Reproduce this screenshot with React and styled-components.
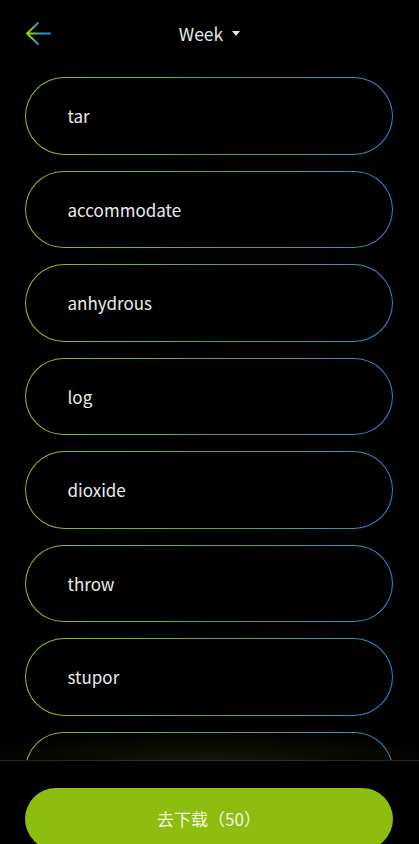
import React from "react";
import styled, { createGlobalStyle } from "styled-components";

const Global = createGlobalStyle`
  html, body { margin: 0; padding: 0; background: #000; }
  body { font-family: "Noto Sans CJK SC", "Noto Sans", sans-serif; }
  * { box-sizing: border-box; }
`;

const Page = styled.div`
  width: 419px;
  height: 844px;
  background: #000;
  display: flex;
  flex-direction: column;
  overflow: hidden;
`;

const Header = styled.header`
  height: 66px;
  flex: none;
  display: flex;
  align-items: center;
  justify-content: center;
  position: relative;
`;

const BackButton = styled.button`
  position: absolute;
  left: 22px;
  top: 18px;
  width: 32px;
  height: 32px;
  padding: 0;
  border: none;
  background: none;
  display: flex;
  align-items: center;
  justify-content: center;
`;

const Title = styled.div`
  display: flex;
  align-items: center;
  gap: 9px;
  color: #e6e6e6;
  font-size: 17.5px;
`;

const Caret = styled.span`
  width: 0;
  height: 0;
  border-left: 4px solid transparent;
  border-right: 4px solid transparent;
  border-top: 5px solid #e6e6e6;
  margin-top: 1px;
`;

const List = styled.div`
  flex: 1;
  min-height: 0;
  overflow: hidden;
  padding: 11px 26px 0 25px;
  display: flex;
  flex-direction: column;
  gap: 16px;
`;

const Card = styled.div`
  flex: none;
  height: 77.5px;
  border-radius: 40px;
  border: 1.7px solid transparent;
  background:
    linear-gradient(#000, #000) padding-box,
    linear-gradient(90deg, #92c210 0%, #5ca24e 50%, #2a8ad4 100%) border-box;
  display: flex;
  align-items: center;
  padding-left: 41.5px;
  color: #ececec;
  font-size: 17px;
`;

const Bottom = styled.footer`
  flex: none;
  height: 84px;
  position: relative;
  border-top: 1px solid #1d2520;
  padding: 27px 26px 0 25px;
  &::before {
    content: "";
    position: absolute;
    left: 0;
    right: 0;
    bottom: 100%;
    height: 30px;
    background: radial-gradient(ellipse 60% 100% at 50% 100%, rgba(120, 150, 40, 0.16), rgba(120, 150, 40, 0) 100%);
    pointer-events: none;
  }
`;

const Download = styled.button`
  width: 100%;
  height: 62px;
  border: none;
  border-radius: 31px;
  background: #8dbd0e;
  color: #f4f6e8;
  font-family: "Noto Sans CJK SC", "Noto Sans", sans-serif;
  font-size: 17px;
  display: flex;
  align-items: center;
  justify-content: center;
  padding: 0 0 2px 0;
`;

const words = ["tar", "accommodate", "anhydrous", "log", "dioxide", "throw", "stupor", ""];

function BackArrow() {
  return (
    <svg width="32" height="32" viewBox="0 0 32 32" fill="none">
      <defs>
        <radialGradient id="ag" cx="5" cy="15.5" r="17" gradientUnits="userSpaceOnUse">
          <stop offset="0" stopColor="#9ccc10" />
          <stop offset="0.35" stopColor="#8cc020" />
          <stop offset="0.7" stopColor="#3aa0b8" />
          <stop offset="1" stopColor="#2a8ad4" />
        </radialGradient>
      </defs>
      <path d="M16 5 L5 15.5 L16 26 M5 15.5 H28" stroke="url(#ag)" strokeWidth="2" strokeLinecap="round" strokeLinejoin="round" />
    </svg>
  );
}

export default function App() {
  return (
    <>
      <Global />
      <Page>
        <Header>
          <BackButton aria-label="back">
            <BackArrow />
          </BackButton>
          <Title>
            Week <Caret />
          </Title>
        </Header>
        <List>
          {words.map((w, i) => (
            <Card key={i}>{w}</Card>
          ))}
        </List>
        <Bottom>
          <Download>去下载（50）</Download>
        </Bottom>
      </Page>
    </>
  );
}
